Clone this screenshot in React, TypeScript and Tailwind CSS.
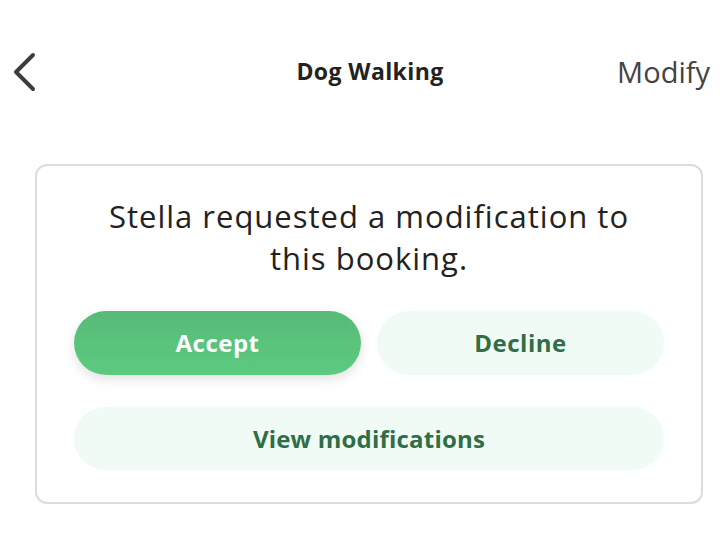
export default function App() {
  return (
    <div className="min-h-[543px] w-[726px] bg-white font-['Open_Sans',sans-serif]">
      {/* Header */}
      <div className="grid h-[143px] grid-cols-[1fr_auto_1fr] items-center pl-[12px] pr-[16px]">
        <button className="flex w-[40px] items-center text-[#3d3d3d]">
          <svg width="26" height="40" viewBox="0 0 26 40" fill="none">
            <path d="M21 3 L4 20 L21 37" stroke="currentColor" strokeWidth="4" strokeLinecap="round" strokeLinejoin="round" />
          </svg>
        </button>
        <h1 className="ml-[18px] text-[23px] font-bold leading-none tracking-[0.4px] text-[#222]">Dog Walking</h1>
        <button className="justify-self-end text-[29px] leading-none text-[#444]">Modify</button>
      </div>

      {/* Card */}
      <div className="px-[35px] pt-[21px]">
        <div className="flex h-[340px] w-[668px] flex-col rounded-[12px] border-2 border-[#dcdcdc] px-[37px] pt-[29px]">
          <p className="-mx-[20px] text-center text-[31px] leading-[42px] tracking-[1px] text-[#222]">
            Stella requested a modification to
            <br />
            this booking.
          </p>
          <div className="mt-[32px] flex gap-[16px]">
            <button className="h-[64px] flex-1 rounded-full bg-gradient-to-b from-[#56bb77] to-[#5dca80] text-[24px] font-bold tracking-[0.5px] text-white shadow-[0_4px_12px_rgba(0,0,0,0.12)]">
              Accept
            </button>
            <button className="h-[64px] flex-1 rounded-full bg-[#f1fbf5] text-[24px] font-bold tracking-[0.5px] text-[#2f6e46]">
              Decline
            </button>
          </div>
          <button className="mt-[32px] h-[63px] w-full rounded-full bg-[#f1fbf5] text-[24px] font-bold tracking-[0.2px] text-[#2f6e46]">
            View modifications
          </button>
        </div>
      </div>
    </div>
  )
}
